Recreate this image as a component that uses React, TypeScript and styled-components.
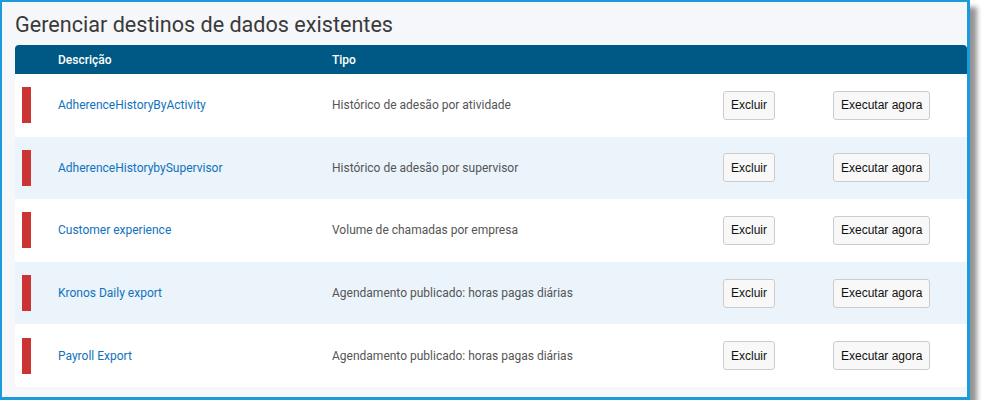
import React from 'react'
import styled, { createGlobalStyle } from 'styled-components'

const GlobalStyle = createGlobalStyle`
  html, body {
    margin: 0;
    padding: 0;
    background: #ffffff;
  }
  body {
    font-family: Roboto, "Liberation Sans", Arial, sans-serif;
  }
`

type Destino = {
  descricao: string
  tipo: string
}

const destinos: Destino[] = [
  { descricao: 'AdherenceHistoryByActivity', tipo: 'Histórico de adesão por atividade' },
  { descricao: 'AdherenceHistorybySupervisor', tipo: 'Histórico de adesão por supervisor' },
  { descricao: 'Customer experience', tipo: 'Volume de chamadas por empresa' },
  { descricao: 'Kronos Daily export', tipo: 'Agendamento publicado: horas pagas diárias' },
  { descricao: 'Payroll Export', tipo: 'Agendamento publicado: horas pagas diárias' },
]

const App = () => {
  return (
    <>
      <GlobalStyle />
      <Frame>
        <Title>Gerenciar destinos de dados existentes</Title>
        <Table>
          <HeaderRow>
            <span />
            <HeaderCell>Descrição</HeaderCell>
            <HeaderCell>Tipo</HeaderCell>
            <span />
            <span />
          </HeaderRow>
          {destinos.map((d, i) => (
            <Row key={d.descricao} $alt={i % 2 === 1}>
              <StatusBar />
              <DescLink href='#'>{d.descricao}</DescLink>
              <Tipo>{d.tipo}</Tipo>
              <ButtonCell>
                <Button>Excluir</Button>
              </ButtonCell>
              <ButtonCell>
                <Button>Executar agora</Button>
              </ButtonCell>
            </Row>
          ))}
        </Table>
      </Frame>
    </>
  )
}

const Frame = styled.div`
  box-sizing: border-box;
  width: 970px;
  height: 400px;
  padding: 0 0 10px 13px;
  border-style: solid;
  border-color: #1b9bd9;
  border-width: 2px 3px 3px 2px;
  background-color: #f6f7fb;
  box-shadow: 7px 7px 5px rgba(0, 0, 0, 0.42);
  display: flex;
  flex-direction: column;
`

const Title = styled.h1`
  margin: 0;
  height: 42px;
  display: flex;
  align-items: center;
  font-size: 21.6px;
  font-weight: 400;
  color: #3a3a3a;
  padding-top: 1px;
`

const columns = '43px 274px 391px 110px 1fr'

const Table = styled.div`
  border-radius: 4px;
  overflow: hidden;
  background-color: #ffffff;
`

const HeaderRow = styled.div`
  display: grid;
  grid-template-columns: ${columns};
  align-items: center;
  height: 29px;
  background-color: #005984;
`

const HeaderCell = styled.div`
  font-size: 12px;
  font-weight: 500;
  color: #ffffff;
`

const Row = styled.div<{ $alt: boolean }>`
  display: grid;
  grid-template-columns: ${columns};
  align-items: center;
  height: 62.6px;
  background-color: ${(p) => (p.$alt ? '#ebf3fb' : '#ffffff')};
`

const StatusBar = styled.div`
  width: 9px;
  height: 36px;
  margin-left: 7px;
  background-color: #cc3333;
`

const DescLink = styled.a`
  font-size: 12px;
  color: #1072bd;
  text-decoration: none;
`

const Tipo = styled.div`
  font-size: 12px;
  color: #555555;
`

const ButtonCell = styled.div`
  display: flex;
`

const Button = styled.button`
  height: 29px;
  padding: 0 7px;
  font-family: "Liberation Sans", Arial, sans-serif;
  font-size: 12px;
  color: #111111;
  background-color: #f8f8f8;
  border: 1px solid #cccccc;
  border-radius: 3px;
  cursor: pointer;
`

export default App
